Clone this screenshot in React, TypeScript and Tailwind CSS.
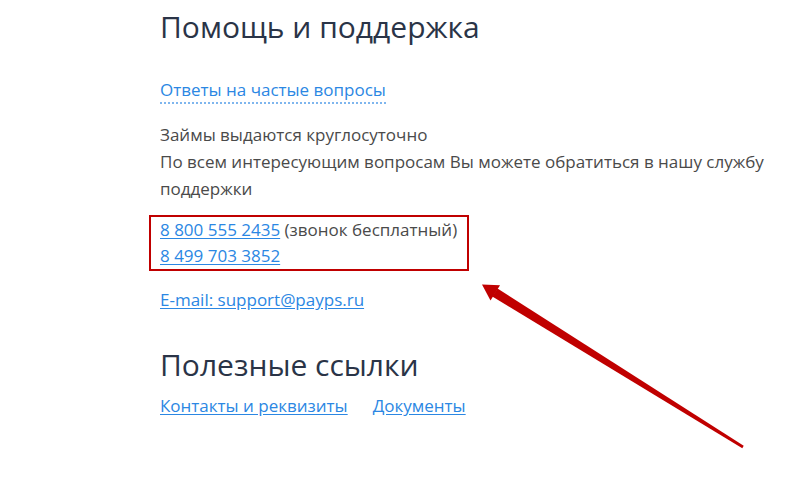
import React from 'react';

const font = { fontFamily: '"Open Sans", "Noto Sans", sans-serif' };

function Arrow() {
  // red annotation arrow pointing at the phone box
  return (
    <svg className="absolute left-0 top-0 pointer-events-none" width="800" height="484" viewBox="0 0 800 484">
      <polygon points="497.5,288.5 492.3,296.5 742.3,448.2 743.7,445.8" fill="#c00000" />
      <polygon points="482,284.5 500,285.3 490.5,300.5" fill="#c00000" />
    </svg>
  );
}

export default function App() {
  return (
    <div className="relative w-[800px] h-[484px] bg-white overflow-hidden" style={font}>
      <div className="pl-[160px] pt-[9px] w-[790px]">
        <h1 className="text-[30px] leading-[36px] text-[#2a3447] font-normal">Помощь и поддержка</h1>

        <div className="mt-[33px] leading-[24px]">
          <a href="#" className="text-[17px] text-[#2b87e3] border-b-2 border-dotted border-[#7fb6ee] pb-[1px]">
            Ответы на частые вопросы
          </a>
        </div>

        <div className="mt-[19px] text-[17px] leading-[27px] text-[#4a4a4a] pr-[10px]">
          <p>Займы выдаются круглосуточно</p>
          <p>По всем интересующим вопросам Вы можете обратиться в нашу службу поддержки</p>
        </div>

        <div className="mt-[13px] -ml-[11px] w-[320px] border-2 border-[#c00000] pl-[9px] text-[17px] leading-[26px]">
          <div className="text-[#4a4a4a]">
            <a href="#" className="text-[#2b87e3] underline underline-offset-2">8 800 555 2435</a> (звонок бесплатный)
          </div>
          <div>
            <a href="#" className="text-[#2b87e3] underline underline-offset-2">8 499 703 3852</a>
          </div>
        </div>

        <div className="mt-[16px] text-[17px] leading-[26px]">
          <a href="#" className="text-[#2b87e3] underline underline-offset-2">E-mail: support@payps.ru</a>
        </div>

        <h2 className="mt-[34px] text-[30px] leading-[36px] text-[#2a3447] font-normal">Полезные ссылки</h2>

        <div className="mt-[10px] flex gap-[25px] text-[17px] leading-[26px]">
          <a href="#" className="text-[#2b87e3] underline underline-offset-2">Контакты и реквизиты</a>
          <a href="#" className="text-[#2b87e3] underline underline-offset-2">Документы</a>
        </div>
      </div>
      <Arrow />
    </div>
  );
}
